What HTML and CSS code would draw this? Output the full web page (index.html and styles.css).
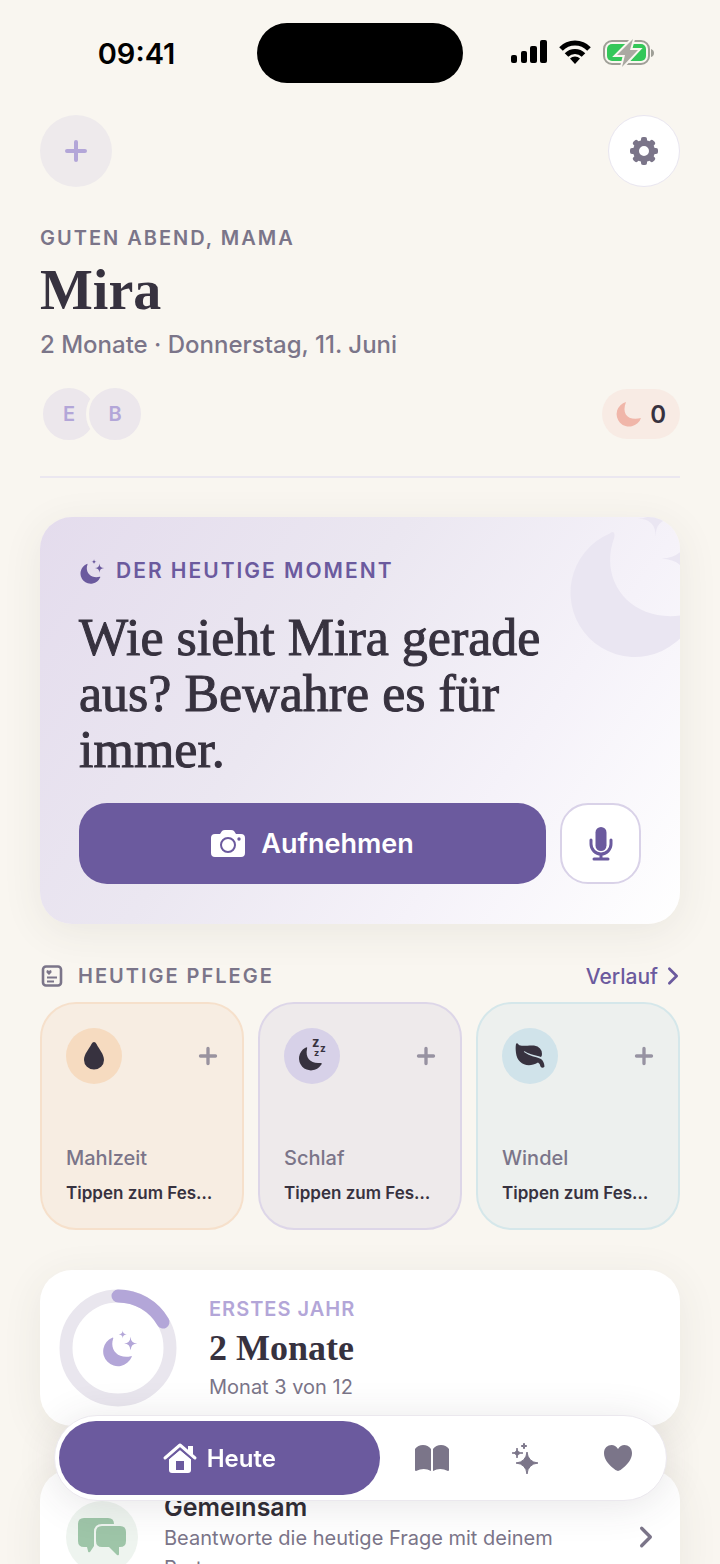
FILE: index.html
```html
<!doctype html>
<html lang="de">
<head><meta charset="utf-8">
	<meta name="viewport" content="width=device-width">
	<title>Mira</title>
	<link rel="stylesheet" href="styles.css">
</head>
<body>
	<svg class="defs" aria-hidden="true">
		<symbol id="plus" viewBox="0 0 24 24"><path d="M12 3v18M3 12h18" fill="none" stroke="currentColor" stroke-width="4" stroke-linecap="round"/></symbol>
		<symbol id="chevron" viewBox="0 0 14 22"><path d="M3 3l8 8-8 8" fill="none" stroke="currentColor" stroke-width="3" stroke-linecap="round" stroke-linejoin="round"/></symbol>
		<symbol id="moon" viewBox="0 0 115 115">
			<path d="M33 26Q37 23 36 29C26 56 44 82 74 82Q81 82 88 80Q93 79 90 83A43.500 43.500 0 1 1 33 26z"/>
			<path d="M64 4Q64 16 76 16Q64 16 64 28Q64 16 52 16Q64 16 64 4zM87 23Q88 42 107 43Q88 44 87 63Q86 44 68 43Q86 42 87 23z"/>
		</symbol>
	</svg>
	<div class="app">
		<header class="status">
			<time>09:41</time>
			<div class="island"></div>
			<div class="signals">
				<svg width="38" height="24" viewBox="0 0 38 24"><rect x="1" y="15" width="6" height="8" rx="2"/><rect x="11" y="11" width="6" height="12" rx="2"/><rect x="20" y="6" width="7" height="17" rx="2"/><rect x="30" y="0" width="7" height="23" rx="2"/></svg>
				<svg width="32" height="24" viewBox="0 0 32 24"><path d="M2 9a19.500 19.500 0 0 1 28 0M7.500 15a12 12 0 0 1 17 0" fill="none" stroke="#000" stroke-width="5"/><path d="M16 24l-5-5.500a7 7 0 0 1 10 0z"/></svg>
				<svg width="52" height="26" viewBox="0 0 52 26"><rect x="2" y="1" width="45" height="23" rx="8" fill="none" stroke="#9f9f97" stroke-width="2"/><rect x="5" y="4" width="39" height="17" rx="5" fill="#34c759"/><path d="M49 9q3 1 3 4t-3 4z" fill="#9f9f97"/><path class="bolt" d="M31-1L15 15h8l-3 12 16-17h-8z" fill="#aaa9a2" stroke="#f9f6f0" stroke-width="4"/></svg>
			</div>
		</header>
		<main>
			<div class="row tools">
				<button type="button" class="round add" aria-label="Hinzufügen"><svg width="24" height="24"><use href="#plus"/></svg></button>
				<button type="button" class="round set" aria-label="Einstellungen">
					<svg width="30" height="30" viewBox="-15 -15 30 30">
						<circle r="8" fill="none" stroke="currentColor" stroke-width="6"/>
						<g id="teeth"><rect x="-3" y="-14" width="6" height="6" rx="2"/><rect x="-3" y="8" width="6" height="6" rx="2"/><rect x="-14" y="-3" width="6" height="6" rx="2"/><rect x="8" y="-3" width="6" height="6" rx="2"/></g>
						<use href="#teeth" transform="rotate(45)"/>
					</svg>
				</button>
			</div>
			<div class="intro">
				<p class="caps">GUTEN ABEND, MAMA</p>
				<h1>Mira</h1>
				<p class="date">2 Monate · Donnerstag, 11. Juni</p>
				<div class="row people">
					<div class="avatars"><span>E</span><span>B</span></div>
					<div class="chip"><svg width="26" height="26" viewBox="0 0 26 26"><path d="M10 1C5 14 13 20 25 17A12.500 12.500 0 1 1 10 1z" fill="#f0b6a9"/></svg>0</div>
				</div>
			</div>
			<section class="hero">
				<svg class="bigmoon" width="170" height="170"><use href="#moon"/></svg>
				<p class="caps"><svg width="27" height="27"><use href="#moon"/></svg>DER HEUTIGE MOMENT</p>
				<h2>Wie sieht Mira gerade aus? Bewahre es für immer.</h2>
				<div class="record">
					<button type="button" class="shoot">
						<svg width="34" height="28" viewBox="0 0 34 28"><path d="M4 4h5l2-3q1-1 3-1h6q2 0 3 1l2 3h5q4 0 4 4v15q0 4-4 4H4q-4 0-4-4V8q0-4 4-4z" fill="#fff"/><circle cx="17" cy="15" r="7" fill="none" stroke="#6b5a9e" stroke-width="2"/><circle cx="28" cy="9" r="1.700" fill="#6b5a9e"/></svg>
						Aufnehmen
					</button>
					<button type="button" class="mic" aria-label="Sprachaufnahme">
						<svg width="24" height="34" viewBox="0 0 24 34"><rect x="6.500" y="0" width="11" height="24" rx="5.500"/><path d="M2 13v4a10 10 0 0 0 20 0v-4M12 27v5M5 32h14" fill="none" stroke="currentColor" stroke-width="3" stroke-linecap="round"/></svg>
					</button>
				</div>
			</section>
			<div class="row care">
				<h3 class="caps"><svg width="24" height="24" viewBox="0 0 24 24"><g fill="none" stroke="currentColor"><rect x="3" y="2.500" width="18" height="19" rx="3" stroke-width="2.600"/><path d="M7 13.500h10M7 17.500h7" stroke-width="2"/></g><path d="M9 11L6.500 8.500q-.5-2.500 1.200-2.500L9 7l1.300-1q1.700 0 1.200 2.500z"/></svg>HEUTIGE PFLEGE</h3>
				<a href="#verlauf">Verlauf <svg width="14" height="20"><use href="#chevron"/></svg></a>
			</div>
			<div class="tiles">
				<button type="button" class="tile food">
					<span class="row"><i class="dot"><svg width="20" height="28" viewBox="0 0 20 28"><path d="M10 0q1.500 0 2.500 2C15 7 20 12 20 18a10 9.500 0 0 1-20 0C0 12 5 7 7.500 2q1-2 2.500-2z"/></svg></i><svg class="more" width="20" height="20"><use href="#plus"/></svg></span>
					<span class="name">Mahlzeit</span><b>Tippen zum Fes…</b>
				</button>
				<button type="button" class="tile sleep">
					<span class="row"><i class="dot"><svg width="30" height="34" viewBox="0 0 30 34"><path d="M8 9q3-2 2 1C8 19 14 25 23 24q3-.5 1 2A12 12 0 1 1 8 9z"/><text x="15" y="8" font-size="13">z</text><text x="23" y="13" font-size="10">z</text><text x="17" y="17" font-size="9">z</text></svg></i><svg class="more" width="20" height="20"><use href="#plus"/></svg></span>
					<span class="name">Schlaf</span><b>Tippen zum Fes…</b>
				</button>
				<button type="button" class="tile diaper">
					<span class="row"><i class="dot"><svg width="30" height="26" viewBox="0 0 30 26"><path d="M1 1Q2-.5 3.500 1.500C6 4 13 2 19 2.500q8 1.500 8 8.500 0 2-1 3C20 12 16 12 10 8.500q-1.500-.5-1 .5c7 5 10 4 17 7q3 2 3.500 7.500-2 2.500-4 0-.5-3-2.500-4C12 26 2 20 1 10 .5 6 .5 4 1 1z"/></svg></i><svg class="more" width="20" height="20"><use href="#plus"/></svg></span>
					<span class="name">Windel</span><b>Tippen zum Fes…</b>
				</button>
			</div>
			<section class="card year">
				<svg width="118" height="118" viewBox="0 0 118 118">
					<circle cx="59" cy="59" r="52" fill="none" stroke="#e9e6ee" stroke-width="13"/>
					<path d="M59 7A52 52 0 0 1 104 33" fill="none" stroke="#b3a6d8" stroke-width="13" stroke-linecap="round"/>
					<use href="#moon" x="42" y="40" width="39" height="39" fill="#b3a6d8"/>
				</svg>
				<div>
					<p class="caps">ERSTES JAHR</p>
					<h3>2 Monate</h3>
					<p>Monat 3 von 12</p>
				</div>
			</section>
			<a href="#gemeinsam" class="card together">
				<span class="bubble"><svg width="49" height="38" viewBox="0 0 49 38"><path d="M6 0h24q6 0 6 6H24q-8 0-8 8v14l-4 6q-2 1-2-1l-1-4H6q-6 0-6-6V6q0-6 6-6z"/><path d="M24 8h18q6 0 6 6v9q0 6-6 6h-1v7q0 2-2 1l-8-8h-7q-6 0-6-6v-9q0-6 6-6z"/></svg></span>
				<span class="text"><strong>Gemeinsam</strong>Beantworte die heutige Frage mit deinem Partner</span>
				<svg class="go" width="16" height="24"><use href="#chevron"/></svg>
			</a>
		</main>
		<nav>
			<a href="#heute" class="on"><svg width="34" height="30" viewBox="0 0 34 30"><path d="M17 7l11 9v11q0 3-3 3H9q-3 0-3-3V16zM25 3h5v9l-5-4z" fill="#fff"/><path d="M2 15L17 2l15 13" fill="none" stroke="#6b5a9e" stroke-width="7"/><path d="M2 15L17 2l15 13" fill="none" stroke="#fff" stroke-width="3" stroke-linecap="round" stroke-linejoin="round"/><path d="M25 3h5v9l-5-4z" fill="#fff"/><rect x="13" y="18" width="8" height="9" fill="#6b5a9e"/></svg> Heute</a>
			<a href="#tagebuch" aria-label="Tagebuch"><svg width="34" height="27" viewBox="0 0 34 27"><path d="M0 4q3-4 8-4t8 4v22q-7-4-15 0-1 0-1-1zM18 4q3-4 8-4t8 4v21q0 1-1 1-8-4-15 0z"/></svg></a>
			<a href="#momente" aria-label="Momente"><svg width="28" height="33" viewBox="0 0 28 33"><path d="M16 10Q17 20 27 21Q17 22 16 32Q15 22 5 21Q15 20 16 10zM6 6Q6 11 12 11Q6 11 6 16Q6 11 1 11Q6 11 6 6zM13 1Q13 4 16 4Q13 4 13 7Q13 4 10 4Q13 4 13 1z" stroke="currentColor"/></svg></a>
			<a href="#favoriten" aria-label="Favoriten"><svg width="28" height="27" viewBox="0 0 28 27"><path d="M14 26Q12 26 9 23C4 19 0 14 0 8 0 0 10-3 14 4 18-3 28 0 28 8c0 6-4 11-9 15q-3 3-5 3z"/></svg></a>
		</nav>
	</div>
</body>
</html>
```

FILE: styles.css
```css
*{box-sizing:border-box}
body{margin:0;background:#f9f6f0;color:#37323f;font-family:Inter,"Liberation Sans",sans-serif}
h1,h2,h3,p{margin:0}
a{color:inherit;text-decoration:none}
button{font:inherit;color:inherit;cursor:pointer}
svg{display:block;flex:none;overflow:visible;fill:currentColor}
.defs{position:absolute;width:0;height:0}
.app{height:100vh;overflow:hidden}
.row{display:flex;align-items:center;justify-content:space-between}

.status{display:grid;grid-template-columns:1fr 206px 1fr;align-items:center;height:106px;color:#000}
.status time{padding-left:16px;font-size:29px;font-weight:600;text-align:center}
.island{height:60px;border-radius:30px;background:#000}
.signals{display:flex;justify-content:center;gap:11px;padding-right:20px}
.bolt{paint-order:stroke}

main{padding:9px 40px 0}
.round{display:grid;place-items:center;width:72px;height:72px;padding:0;border:0;border-radius:50%}
.add{background:#eeeaec;color:#b3a6d8}
.set{border:1px solid #e9e6f0;background:#fff;color:#7b7589}
.caps{font-size:20px;line-height:24px;font-weight:600;letter-spacing:2px;color:#7b7589}
.intro{padding:39px 0 33px;border-bottom:2px solid #ebe7f0}
h1,h2,.year h3{font-family:"Liberation Serif",serif}
h1{padding:6px 0 5px;font-size:56px;line-height:68px}
.date{font-size:24px;line-height:32px;font-weight:500;color:#7b7589}
.people{padding-top:24px}
.avatars{display:flex}
.avatars span{display:grid;place-items:center;width:58px;height:58px;border:3px solid #f9f6f0;border-radius:50%;background:#ece7ec;color:#b3a6d8;font-size:20px;font-weight:600}
.avatars span+span{margin-left:-12px}
.chip{display:flex;align-items:center;gap:8px;height:50px;padding:0 14px;border-radius:25px;background:#f8ebe4;font-size:24px;font-weight:600}

.hero{position:relative;overflow:hidden;margin-top:39px;padding:40px 39px;border-radius:32px;background:linear-gradient(125deg,#e4dced,#ebe7f1 40%,#f5f2f9 70%,#fff)}
.hero,.card{box-shadow:0 8px 40px rgba(70,65,45,.08)}
.bigmoon{position:absolute;top:-22px;right:-51px;color:#eae6f2}
.hero .caps,.care .caps{display:flex;align-items:center}
.hero .caps{gap:10px;line-height:28px;font-size:21px;color:#6b5a9e}
h2{padding:25px 50px 25px 0;font-size:52px;line-height:56px;font-weight:400;-webkit-text-stroke:1px}
.record{display:flex;gap:14px}
.shoot{display:flex;flex:1;align-items:center;justify-content:center;gap:16px;height:81px;border:0;border-radius:28px;background:#6b5a9e;color:#fff;font-size:27px;font-weight:600}
.mic{display:grid;place-items:center;width:81px;height:81px;padding:0;border:2px solid #d9d2e8;border-radius:28px;background:#fff;color:#6b5a9e}

.care{margin-top:38px;height:28px}
.care .caps{gap:14px}
.care a{display:flex;align-items:center;gap:8px;color:#6b5a9e;font-size:21px;font-weight:500}
.tiles{display:grid;grid-template-columns:repeat(3,1fr);gap:14px;margin-top:12px}
.tile{display:flex;flex-direction:column;height:228px;padding:24px;border:2px solid;border-radius:36px;text-align:left}
.dot{display:grid;place-items:center;width:56px;height:56px;border-radius:50%;font-style:normal}
.dot text{font-weight:700}
.more{color:#7b7589;opacity:.75}
.name{margin-top:auto;font-size:20px;line-height:24px;font-weight:500;color:#7b7589}
.tile b{padding-top:12px;font-size:17px;line-height:22px;font-weight:600;white-space:nowrap}
.food{border-color:#f6e0cb;background:#f7ede2}
.food .dot{background:#f6dbc0}
.sleep{border-color:#ddd6e8;background:#eeeaeb}
.sleep .dot{background:#d7d1e8}
.diaper{border-color:#d5e7ea;background:#edf0ee}
.diaper .dot{background:#d0e3ea}

.card{display:flex;align-items:center;border-radius:32px;background:#fff}
.year{gap:32px;margin-top:40px;padding:19px}
.year h3{padding:4px 0;font-size:36px;line-height:44px}
.year p{font-size:20px;line-height:26px;color:#7b7589}
.year .caps{letter-spacing:1px;color:#b3a6d8}
.together{gap:26px;margin-top:43px;padding:22px 26px}
.bubble{display:grid;flex:none;place-items:center;width:72px;height:72px;border-radius:50%;background:#eef4ef;color:#9ec5a8}
.text{flex:1;font-size:20px;line-height:30px;color:#7b7589}
.text strong{display:block;color:#2f2c35;font-size:25px;line-height:32px;font-weight:600}
.go{color:#7b7589}

nav{position:fixed;left:54px;right:53px;bottom:63px;display:flex;align-items:center;padding:5px 2px 5px 4px;border:1px solid #ebe8ee;border-radius:43px;background:#fff;color:#7b7589;box-shadow:0 4px 40px rgba(55,50,60,.12)}
nav a{display:flex;flex:1;align-items:center;justify-content:center;height:74px}
nav .on{flex:0 0 53%;gap:10px;margin-right:6px;border-radius:37px;background:#6b5a9e;color:#fff;font-size:24px;font-weight:600}
```
